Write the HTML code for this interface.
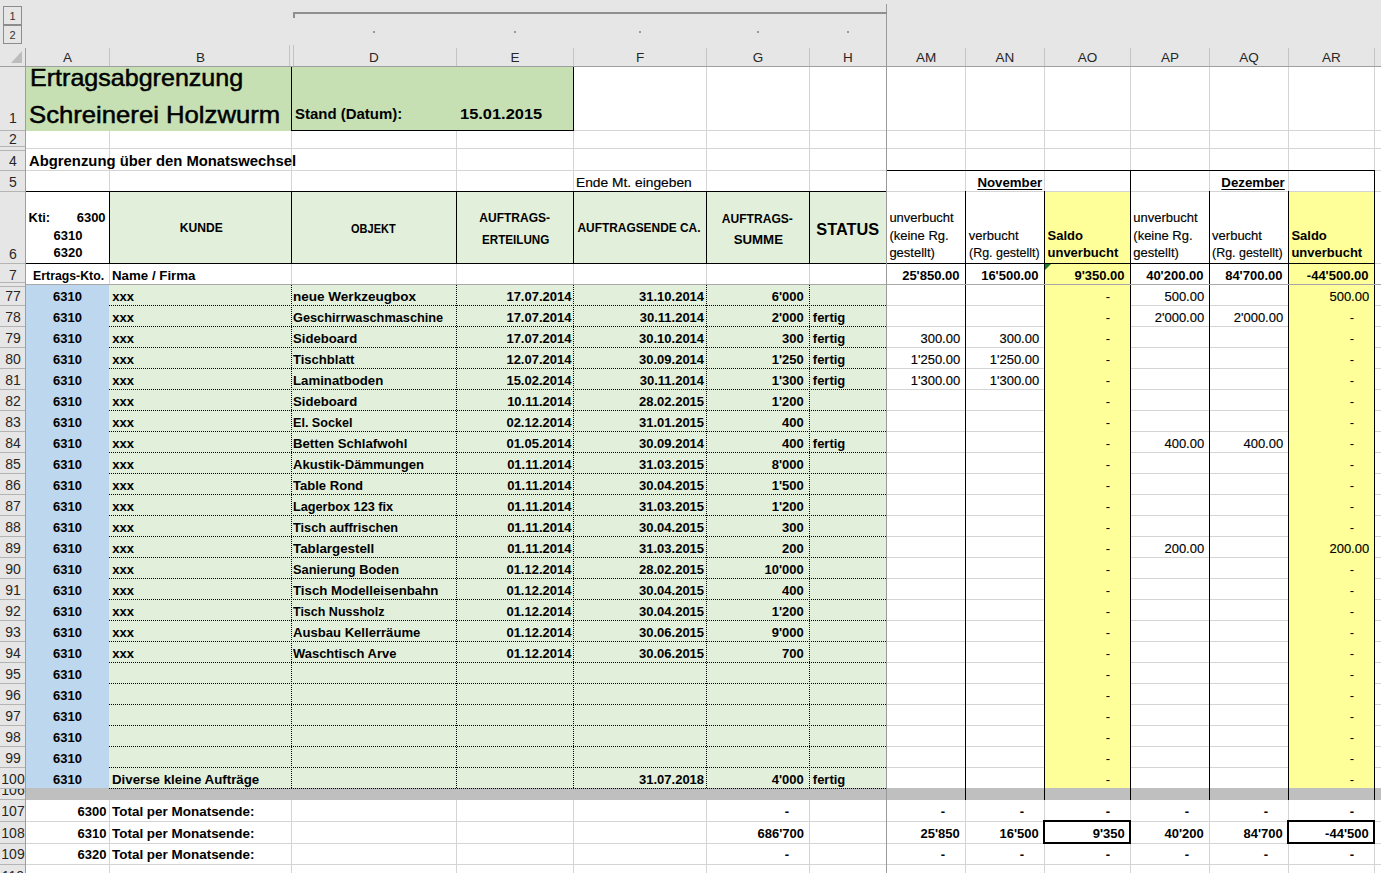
<!DOCTYPE html><html><head><meta charset="utf-8"><style>html,body{margin:0;padding:0;}body{width:1381px;height:873px;position:relative;overflow:hidden;background:#fff;font-family:"Liberation Sans",sans-serif;}#g div{position:absolute;}#h div{position:absolute;}.t{position:absolute;white-space:pre;line-height:1;}</style></head><body><div id="g">
<div style="left:109px;top:66px;width:1px;height:807px;background:#d4d4d4"></div>
<div style="left:291px;top:66px;width:1px;height:807px;background:#d4d4d4"></div>
<div style="left:456px;top:66px;width:1px;height:807px;background:#d4d4d4"></div>
<div style="left:573px;top:66px;width:1px;height:807px;background:#d4d4d4"></div>
<div style="left:706px;top:66px;width:1px;height:807px;background:#d4d4d4"></div>
<div style="left:809px;top:66px;width:1px;height:807px;background:#d4d4d4"></div>
<div style="left:886px;top:66px;width:1px;height:807px;background:#d4d4d4"></div>
<div style="left:965px;top:66px;width:1px;height:807px;background:#d4d4d4"></div>
<div style="left:1044px;top:66px;width:1px;height:807px;background:#d4d4d4"></div>
<div style="left:1130px;top:66px;width:1px;height:807px;background:#d4d4d4"></div>
<div style="left:1209px;top:66px;width:1px;height:807px;background:#d4d4d4"></div>
<div style="left:1288px;top:66px;width:1px;height:807px;background:#d4d4d4"></div>
<div style="left:1374px;top:66px;width:1px;height:807px;background:#d4d4d4"></div>
<div style="left:1453px;top:66px;width:1px;height:807px;background:#d4d4d4"></div>
<div style="left:25px;top:130px;width:1356px;height:1px;background:#d4d4d4"></div>
<div style="left:25px;top:148px;width:1356px;height:1px;background:#d4d4d4"></div>
<div style="left:25px;top:170px;width:1356px;height:1px;background:#d4d4d4"></div>
<div style="left:25px;top:191px;width:1356px;height:1px;background:#d4d4d4"></div>
<div style="left:25px;top:263px;width:1356px;height:1px;background:#d4d4d4"></div>
<div style="left:25px;top:284px;width:1356px;height:1px;background:#d4d4d4"></div>
<div style="left:25px;top:305px;width:1356px;height:1px;background:#d4d4d4"></div>
<div style="left:25px;top:326px;width:1356px;height:1px;background:#d4d4d4"></div>
<div style="left:25px;top:347px;width:1356px;height:1px;background:#d4d4d4"></div>
<div style="left:25px;top:368px;width:1356px;height:1px;background:#d4d4d4"></div>
<div style="left:25px;top:389px;width:1356px;height:1px;background:#d4d4d4"></div>
<div style="left:25px;top:410px;width:1356px;height:1px;background:#d4d4d4"></div>
<div style="left:25px;top:431px;width:1356px;height:1px;background:#d4d4d4"></div>
<div style="left:25px;top:452px;width:1356px;height:1px;background:#d4d4d4"></div>
<div style="left:25px;top:473px;width:1356px;height:1px;background:#d4d4d4"></div>
<div style="left:25px;top:494px;width:1356px;height:1px;background:#d4d4d4"></div>
<div style="left:25px;top:515px;width:1356px;height:1px;background:#d4d4d4"></div>
<div style="left:25px;top:536px;width:1356px;height:1px;background:#d4d4d4"></div>
<div style="left:25px;top:557px;width:1356px;height:1px;background:#d4d4d4"></div>
<div style="left:25px;top:578px;width:1356px;height:1px;background:#d4d4d4"></div>
<div style="left:25px;top:599px;width:1356px;height:1px;background:#d4d4d4"></div>
<div style="left:25px;top:620px;width:1356px;height:1px;background:#d4d4d4"></div>
<div style="left:25px;top:641px;width:1356px;height:1px;background:#d4d4d4"></div>
<div style="left:25px;top:662px;width:1356px;height:1px;background:#d4d4d4"></div>
<div style="left:25px;top:683px;width:1356px;height:1px;background:#d4d4d4"></div>
<div style="left:25px;top:704px;width:1356px;height:1px;background:#d4d4d4"></div>
<div style="left:25px;top:725px;width:1356px;height:1px;background:#d4d4d4"></div>
<div style="left:25px;top:746px;width:1356px;height:1px;background:#d4d4d4"></div>
<div style="left:25px;top:767px;width:1356px;height:1px;background:#d4d4d4"></div>
<div style="left:25px;top:788px;width:1356px;height:1px;background:#d4d4d4"></div>
<div style="left:25px;top:799px;width:1356px;height:1px;background:#d4d4d4"></div>
<div style="left:25px;top:821px;width:1356px;height:1px;background:#d4d4d4"></div>
<div style="left:25px;top:843px;width:1356px;height:1px;background:#d4d4d4"></div>
<div style="left:25px;top:864px;width:1356px;height:1px;background:#d4d4d4"></div>
<div style="left:25px;top:886px;width:1356px;height:1px;background:#d4d4d4"></div>
<div style="left:26px;top:67px;width:265px;height:64px;background:#c6e0b4"></div>
<div style="left:292px;top:67px;width:281px;height:63px;background:#c6e0b4"></div>
<div style="left:110px;top:192px;width:776px;height:71px;background:#e2efda"></div>
<div style="left:26px;top:285px;width:83px;height:503px;background:#bdd7ee"></div>
<div style="left:109px;top:285px;width:777px;height:503px;background:#e2efda"></div>
<div style="left:1045px;top:192px;width:85px;height:607px;background:#ffff99"></div>
<div style="left:1289px;top:192px;width:85px;height:607px;background:#ffff99"></div>
<div style="left:26px;top:788px;width:1355px;height:12px;background:#bfbfbf"></div>
<div style="left:291px;top:66px;width:1px;height:65px;background:#000"></div>
<div style="left:573px;top:66px;width:1px;height:65px;background:#000"></div>
<div style="left:291px;top:130px;width:283px;height:1px;background:#000"></div>
<div style="left:25px;top:191px;width:861px;height:1px;background:#000"></div>
<div style="left:25px;top:263px;width:1350px;height:1px;background:#000"></div>
<div style="left:109px;top:191px;width:1px;height:73px;background:#000"></div>
<div style="left:291px;top:191px;width:1px;height:73px;background:#000"></div>
<div style="left:456px;top:191px;width:1px;height:73px;background:#000"></div>
<div style="left:573px;top:191px;width:1px;height:73px;background:#000"></div>
<div style="left:706px;top:191px;width:1px;height:73px;background:#000"></div>
<div style="left:809px;top:191px;width:1px;height:73px;background:#000"></div>
<div style="left:886px;top:170px;width:489px;height:1px;background:#000"></div>
<div style="left:1130px;top:170px;width:1px;height:630px;background:#000"></div>
<div style="left:1374px;top:170px;width:1px;height:630px;background:#000"></div>
<div style="left:965px;top:191px;width:1px;height:609px;background:#000"></div>
<div style="left:1044px;top:191px;width:1px;height:609px;background:#000"></div>
<div style="left:1209px;top:191px;width:1px;height:609px;background:#000"></div>
<div style="left:1288px;top:191px;width:1px;height:609px;background:#000"></div>
<div style="left:25px;top:284px;width:1356px;height:1px;background:#a8a8a8"></div>
<div style="left:109px;top:305px;width:777px;height:1px;background:repeating-linear-gradient(90deg,#000 0 1px,transparent 1px 2px)"></div>
<div style="left:109px;top:326px;width:777px;height:1px;background:repeating-linear-gradient(90deg,#000 0 1px,transparent 1px 2px)"></div>
<div style="left:109px;top:347px;width:777px;height:1px;background:repeating-linear-gradient(90deg,#000 0 1px,transparent 1px 2px)"></div>
<div style="left:109px;top:368px;width:777px;height:1px;background:repeating-linear-gradient(90deg,#000 0 1px,transparent 1px 2px)"></div>
<div style="left:109px;top:389px;width:777px;height:1px;background:repeating-linear-gradient(90deg,#000 0 1px,transparent 1px 2px)"></div>
<div style="left:109px;top:410px;width:777px;height:1px;background:repeating-linear-gradient(90deg,#000 0 1px,transparent 1px 2px)"></div>
<div style="left:109px;top:431px;width:777px;height:1px;background:repeating-linear-gradient(90deg,#000 0 1px,transparent 1px 2px)"></div>
<div style="left:109px;top:452px;width:777px;height:1px;background:repeating-linear-gradient(90deg,#000 0 1px,transparent 1px 2px)"></div>
<div style="left:109px;top:473px;width:777px;height:1px;background:repeating-linear-gradient(90deg,#000 0 1px,transparent 1px 2px)"></div>
<div style="left:109px;top:494px;width:777px;height:1px;background:repeating-linear-gradient(90deg,#000 0 1px,transparent 1px 2px)"></div>
<div style="left:109px;top:515px;width:777px;height:1px;background:repeating-linear-gradient(90deg,#000 0 1px,transparent 1px 2px)"></div>
<div style="left:109px;top:536px;width:777px;height:1px;background:repeating-linear-gradient(90deg,#000 0 1px,transparent 1px 2px)"></div>
<div style="left:109px;top:557px;width:777px;height:1px;background:repeating-linear-gradient(90deg,#000 0 1px,transparent 1px 2px)"></div>
<div style="left:109px;top:578px;width:777px;height:1px;background:repeating-linear-gradient(90deg,#000 0 1px,transparent 1px 2px)"></div>
<div style="left:109px;top:599px;width:777px;height:1px;background:repeating-linear-gradient(90deg,#000 0 1px,transparent 1px 2px)"></div>
<div style="left:109px;top:620px;width:777px;height:1px;background:repeating-linear-gradient(90deg,#000 0 1px,transparent 1px 2px)"></div>
<div style="left:109px;top:641px;width:777px;height:1px;background:repeating-linear-gradient(90deg,#000 0 1px,transparent 1px 2px)"></div>
<div style="left:109px;top:662px;width:777px;height:1px;background:repeating-linear-gradient(90deg,#000 0 1px,transparent 1px 2px)"></div>
<div style="left:109px;top:683px;width:777px;height:1px;background:repeating-linear-gradient(90deg,#000 0 1px,transparent 1px 2px)"></div>
<div style="left:109px;top:704px;width:777px;height:1px;background:repeating-linear-gradient(90deg,#000 0 1px,transparent 1px 2px)"></div>
<div style="left:109px;top:725px;width:777px;height:1px;background:repeating-linear-gradient(90deg,#000 0 1px,transparent 1px 2px)"></div>
<div style="left:109px;top:746px;width:777px;height:1px;background:repeating-linear-gradient(90deg,#000 0 1px,transparent 1px 2px)"></div>
<div style="left:109px;top:767px;width:777px;height:1px;background:repeating-linear-gradient(90deg,#000 0 1px,transparent 1px 2px)"></div>
<div style="left:109px;top:788px;width:777px;height:1px;background:repeating-linear-gradient(90deg,#000 0 1px,transparent 1px 2px)"></div>
<div style="left:291px;top:285px;width:1px;height:503px;background:repeating-linear-gradient(180deg,#000 0 1px,transparent 1px 2px)"></div>
<div style="left:456px;top:285px;width:1px;height:503px;background:repeating-linear-gradient(180deg,#000 0 1px,transparent 1px 2px)"></div>
<div style="left:573px;top:285px;width:1px;height:503px;background:repeating-linear-gradient(180deg,#000 0 1px,transparent 1px 2px)"></div>
<div style="left:706px;top:285px;width:1px;height:503px;background:repeating-linear-gradient(180deg,#000 0 1px,transparent 1px 2px)"></div>
<div style="left:809px;top:285px;width:1px;height:503px;background:repeating-linear-gradient(180deg,#000 0 1px,transparent 1px 2px)"></div>
<div style="left:1043px;top:820px;width:88px;height:2px;background:#000"></div>
<div style="left:1043px;top:842px;width:88px;height:2px;background:#000"></div>
<div style="left:1043px;top:820px;width:2px;height:24px;background:#000"></div>
<div style="left:1129px;top:820px;width:2px;height:24px;background:#000"></div>
<div style="left:1287px;top:820px;width:88px;height:2px;background:#000"></div>
<div style="left:1287px;top:842px;width:88px;height:2px;background:#000"></div>
<div style="left:1287px;top:820px;width:2px;height:24px;background:#000"></div>
<div style="left:1373px;top:820px;width:2px;height:24px;background:#000"></div>
<div style="left:886px;top:4px;width:1px;height:869px;background:#9a9a9a"></div>
<div style="left:1045px;top:264px;width:0;height:0;border-top:6px solid #1d7a2c;border-right:6px solid transparent"></div>
<span class="t" id="t0" style="left:29.80px;top:65.68px;font-size:24px;font-weight:normal;color:#000;transform:scaleX(1.0444);transform-origin:left;-webkit-text-stroke:0.5px #000">Ertragsabgrenzung</span>
<span class="t" id="t1" style="left:28.80px;top:102.68px;font-size:24px;font-weight:normal;color:#000;transform:scaleX(1.0701);transform-origin:left;-webkit-text-stroke:0.5px #000">Schreinerei Holzwurm</span>
<span class="t" id="t2" style="left:294.60px;top:107.14px;font-size:14.6px;font-weight:bold;color:#000;transform:scaleX(1.0259);transform-origin:left">Stand (Datum):</span>
<span class="t" id="t3" style="left:459.60px;top:107.14px;font-size:14.6px;font-weight:bold;color:#000;transform:scaleX(1.1253);transform-origin:left">15.01.2015</span>
<span class="t" id="t4" style="left:29.10px;top:153.30px;font-size:15px;font-weight:bold;color:#000;transform:scaleX(0.9888);transform-origin:left">Abgrenzung über den Monatswechsel</span>
<span class="t" id="t5" style="left:576.40px;top:175.80px;font-size:13px;font-weight:normal;color:#000;transform:scaleX(1.0610);transform-origin:left;-webkit-text-stroke:0.15px #000">Ende Mt. eingeben</span>
<span class="t" id="t6" style="left:977.51px;top:175.70px;font-size:13px;font-weight:bold;color:#000;transform:scaleX(1.0192);transform-origin:center"><u style="text-decoration-thickness:1px;text-underline-offset:2px">November</u></span>
<span class="t" id="t7" style="left:1221.93px;top:175.70px;font-size:13px;font-weight:bold;color:#000;transform:scaleX(1.0203);transform-origin:center"><u style="text-decoration-thickness:1px;text-underline-offset:2px">Dezember</u></span>
<span class="t" id="t8" style="left:28.50px;top:211.00px;font-size:13px;font-weight:bold;color:#000">Kti:</span>
<span class="t" id="t9" style="left:76.68px;top:211.00px;font-size:13px;font-weight:bold;color:#000">6300</span>
<span class="t" id="t10" style="left:53.50px;top:228.70px;font-size:13px;font-weight:bold;color:#000">6310</span>
<span class="t" id="t11" style="left:53.50px;top:246.40px;font-size:13px;font-weight:bold;color:#000">6320</span>
<span class="t" id="t12" style="left:179.96px;top:222.04px;font-size:12px;font-weight:bold;color:#000;transform:scaleX(1.0077);transform-origin:center">KUNDE</span>
<span class="t" id="t13" style="left:349.41px;top:222.54px;font-size:12px;font-weight:bold;color:#000;transform:scaleX(0.9140);transform-origin:center">OBJEKT</span>
<span class="t" id="t14" style="left:479.36px;top:212.34px;font-size:12px;font-weight:bold;color:#000">AUFTRAGS-</span>
<span class="t" id="t15" style="left:480.63px;top:234.04px;font-size:12px;font-weight:bold;color:#000;transform:scaleX(0.9720);transform-origin:center">ERTEILUNG</span>
<span class="t" id="t16" style="left:577.49px;top:222.14px;font-size:12px;font-weight:bold;color:#000;transform:scaleX(0.9918);transform-origin:center">AUFTRAGSENDE CA.</span>
<span class="t" id="t17" style="left:722.16px;top:212.84px;font-size:12px;font-weight:bold;color:#000;transform:scaleX(1.0046);transform-origin:center">AUFTRAGS-</span>
<span class="t" id="t18" style="left:735.66px;top:234.04px;font-size:12px;font-weight:bold;color:#000;transform:scaleX(1.1058);transform-origin:center">SUMME</span>
<span class="t" id="t19" style="left:814.66px;top:221.31px;font-size:17px;font-weight:bold;color:#000;transform:scaleX(0.9590);transform-origin:center">STATUS</span>
<span class="t" id="t20" style="left:889.40px;top:211.00px;font-size:13px;font-weight:normal;color:#000;-webkit-text-stroke:0.15px #000">unverbucht</span>
<span class="t" id="t21" style="left:889.40px;top:229.20px;font-size:13px;font-weight:normal;color:#000;-webkit-text-stroke:0.15px #000">(keine Rg.</span>
<span class="t" id="t22" style="left:889.40px;top:246.40px;font-size:13px;font-weight:normal;color:#000;-webkit-text-stroke:0.15px #000">gestellt)</span>
<span class="t" id="t23" style="left:1133.30px;top:211.00px;font-size:13px;font-weight:normal;color:#000;-webkit-text-stroke:0.15px #000">unverbucht</span>
<span class="t" id="t24" style="left:1133.30px;top:229.20px;font-size:13px;font-weight:normal;color:#000;-webkit-text-stroke:0.15px #000">(keine Rg.</span>
<span class="t" id="t25" style="left:1133.30px;top:246.40px;font-size:13px;font-weight:normal;color:#000;-webkit-text-stroke:0.15px #000">gestellt)</span>
<span class="t" id="t26" style="left:968.70px;top:229.20px;font-size:13px;font-weight:normal;color:#000;-webkit-text-stroke:0.15px #000">verbucht</span>
<span class="t" id="t27" style="left:968.70px;top:246.40px;font-size:13px;font-weight:normal;color:#000;transform:scaleX(0.9579);transform-origin:left;-webkit-text-stroke:0.15px #000">(Rg. gestellt)</span>
<span class="t" id="t28" style="left:1212.10px;top:229.20px;font-size:13px;font-weight:normal;color:#000;-webkit-text-stroke:0.15px #000">verbucht</span>
<span class="t" id="t29" style="left:1212.10px;top:246.40px;font-size:13px;font-weight:normal;color:#000;transform:scaleX(0.9579);transform-origin:left;-webkit-text-stroke:0.15px #000">(Rg. gestellt)</span>
<span class="t" id="t30" style="left:1047.50px;top:229.20px;font-size:13px;font-weight:bold;color:#000">Saldo</span>
<span class="t" id="t31" style="left:1047.50px;top:246.40px;font-size:13px;font-weight:bold;color:#000">unverbucht</span>
<span class="t" id="t32" style="left:1291.40px;top:229.20px;font-size:13px;font-weight:bold;color:#000">Saldo</span>
<span class="t" id="t33" style="left:1291.40px;top:246.40px;font-size:13px;font-weight:bold;color:#000">unverbucht</span>
<span class="t" id="t34" style="left:30.54px;top:268.60px;font-size:13px;font-weight:bold;color:#000;transform:scaleX(0.9451);transform-origin:center">Ertrags-Kto.</span>
<span class="t" id="t35" style="left:112.00px;top:268.60px;font-size:13px;font-weight:bold;color:#000;transform:scaleX(1.0226);transform-origin:left">Name / Firma</span>
<span class="t" id="t36" style="left:902.17px;top:268.60px;font-size:13px;font-weight:bold;color:#000">25'850.00</span>
<span class="t" id="t37" style="left:981.17px;top:268.60px;font-size:13px;font-weight:bold;color:#000">16'500.00</span>
<span class="t" id="t38" style="left:1074.41px;top:268.60px;font-size:13px;font-weight:bold;color:#000">9'350.00</span>
<span class="t" id="t39" style="left:1146.17px;top:268.60px;font-size:13px;font-weight:bold;color:#000">40'200.00</span>
<span class="t" id="t40" style="left:1225.17px;top:268.60px;font-size:13px;font-weight:bold;color:#000">84'700.00</span>
<span class="t" id="t41" style="left:1306.84px;top:268.60px;font-size:13px;font-weight:bold;color:#000">-44'500.00</span>
<span class="t" id="t42" style="left:53.04px;top:290.00px;font-size:13px;font-weight:bold;color:#000">6310</span>
<span class="t" id="t43" style="left:112.20px;top:290.00px;font-size:13px;font-weight:bold;color:#000">xxx</span>
<span class="t" id="t44" style="left:293.30px;top:290.00px;font-size:13px;font-weight:bold;color:#000;transform:scaleX(1.0403);transform-origin:left">neue Werkzeugbox</span>
<span class="t" id="t45" style="left:506.42px;top:290.00px;font-size:13px;font-weight:bold;color:#000">17.07.2014</span>
<span class="t" id="t46" style="left:639.02px;top:290.00px;font-size:13px;font-weight:bold;color:#000">31.10.2014</span>
<span class="t" id="t47" style="left:771.68px;top:290.00px;font-size:13px;font-weight:bold;color:#000">6'000</span>
<span class="t" id="t48" style="left:1164.43px;top:290.00px;font-size:13px;font-weight:normal;color:#000;-webkit-text-stroke:0.15px #000">500.00</span>
<span class="t" id="t49" style="left:1105.66px;top:290.00px;font-size:13px;font-weight:normal;color:#000">-</span>
<span class="t" id="t50" style="left:1329.43px;top:290.00px;font-size:13px;font-weight:normal;color:#000;-webkit-text-stroke:0.15px #000">500.00</span>
<span class="t" id="t51" style="left:53.04px;top:311.00px;font-size:13px;font-weight:bold;color:#000">6310</span>
<span class="t" id="t52" style="left:112.20px;top:311.00px;font-size:13px;font-weight:bold;color:#000">xxx</span>
<span class="t" id="t53" style="left:293.30px;top:311.00px;font-size:13px;font-weight:bold;color:#000;transform:scaleX(0.9804);transform-origin:left">Geschirrwaschmaschine</span>
<span class="t" id="t54" style="left:506.42px;top:311.00px;font-size:13px;font-weight:bold;color:#000">17.07.2014</span>
<span class="t" id="t55" style="left:639.74px;top:311.00px;font-size:13px;font-weight:bold;color:#000">30.11.2014</span>
<span class="t" id="t56" style="left:771.68px;top:311.00px;font-size:13px;font-weight:bold;color:#000">2'000</span>
<span class="t" id="t57" style="left:812.80px;top:311.00px;font-size:13px;font-weight:bold;color:#000">fertig</span>
<span class="t" id="t58" style="left:1154.72px;top:311.00px;font-size:13px;font-weight:normal;color:#000;-webkit-text-stroke:0.15px #000">2'000.00</span>
<span class="t" id="t59" style="left:1233.72px;top:311.00px;font-size:13px;font-weight:normal;color:#000;-webkit-text-stroke:0.15px #000">2'000.00</span>
<span class="t" id="t60" style="left:1105.66px;top:311.00px;font-size:13px;font-weight:normal;color:#000">-</span>
<span class="t" id="t61" style="left:1349.66px;top:311.00px;font-size:13px;font-weight:normal;color:#000">-</span>
<span class="t" id="t62" style="left:53.04px;top:332.00px;font-size:13px;font-weight:bold;color:#000">6310</span>
<span class="t" id="t63" style="left:112.20px;top:332.00px;font-size:13px;font-weight:bold;color:#000">xxx</span>
<span class="t" id="t64" style="left:293.30px;top:332.00px;font-size:13px;font-weight:bold;color:#000;transform:scaleX(1.0098);transform-origin:left">Sideboard</span>
<span class="t" id="t65" style="left:506.42px;top:332.00px;font-size:13px;font-weight:bold;color:#000">17.07.2014</span>
<span class="t" id="t66" style="left:639.02px;top:332.00px;font-size:13px;font-weight:bold;color:#000">30.10.2014</span>
<span class="t" id="t67" style="left:782.00px;top:332.00px;font-size:13px;font-weight:bold;color:#000">300</span>
<span class="t" id="t68" style="left:812.80px;top:332.00px;font-size:13px;font-weight:bold;color:#000">fertig</span>
<span class="t" id="t69" style="left:920.43px;top:332.00px;font-size:13px;font-weight:normal;color:#000;-webkit-text-stroke:0.15px #000">300.00</span>
<span class="t" id="t70" style="left:999.43px;top:332.00px;font-size:13px;font-weight:normal;color:#000;-webkit-text-stroke:0.15px #000">300.00</span>
<span class="t" id="t71" style="left:1105.66px;top:332.00px;font-size:13px;font-weight:normal;color:#000">-</span>
<span class="t" id="t72" style="left:1349.66px;top:332.00px;font-size:13px;font-weight:normal;color:#000">-</span>
<span class="t" id="t73" style="left:53.04px;top:353.00px;font-size:13px;font-weight:bold;color:#000">6310</span>
<span class="t" id="t74" style="left:112.20px;top:353.00px;font-size:13px;font-weight:bold;color:#000">xxx</span>
<span class="t" id="t75" style="left:293.30px;top:353.00px;font-size:13px;font-weight:bold;color:#000;transform:scaleX(1.0037);transform-origin:left">Tischblatt</span>
<span class="t" id="t76" style="left:506.42px;top:353.00px;font-size:13px;font-weight:bold;color:#000">12.07.2014</span>
<span class="t" id="t77" style="left:639.02px;top:353.00px;font-size:13px;font-weight:bold;color:#000">30.09.2014</span>
<span class="t" id="t78" style="left:771.68px;top:353.00px;font-size:13px;font-weight:bold;color:#000">1'250</span>
<span class="t" id="t79" style="left:812.80px;top:353.00px;font-size:13px;font-weight:bold;color:#000">fertig</span>
<span class="t" id="t80" style="left:910.72px;top:353.00px;font-size:13px;font-weight:normal;color:#000;-webkit-text-stroke:0.15px #000">1'250.00</span>
<span class="t" id="t81" style="left:989.72px;top:353.00px;font-size:13px;font-weight:normal;color:#000;-webkit-text-stroke:0.15px #000">1'250.00</span>
<span class="t" id="t82" style="left:1105.66px;top:353.00px;font-size:13px;font-weight:normal;color:#000">-</span>
<span class="t" id="t83" style="left:1349.66px;top:353.00px;font-size:13px;font-weight:normal;color:#000">-</span>
<span class="t" id="t84" style="left:53.04px;top:374.00px;font-size:13px;font-weight:bold;color:#000">6310</span>
<span class="t" id="t85" style="left:112.20px;top:374.00px;font-size:13px;font-weight:bold;color:#000">xxx</span>
<span class="t" id="t86" style="left:293.30px;top:374.00px;font-size:13px;font-weight:bold;color:#000;transform:scaleX(1.0164);transform-origin:left">Laminatboden</span>
<span class="t" id="t87" style="left:506.42px;top:374.00px;font-size:13px;font-weight:bold;color:#000">15.02.2014</span>
<span class="t" id="t88" style="left:639.74px;top:374.00px;font-size:13px;font-weight:bold;color:#000">30.11.2014</span>
<span class="t" id="t89" style="left:771.68px;top:374.00px;font-size:13px;font-weight:bold;color:#000">1'300</span>
<span class="t" id="t90" style="left:812.80px;top:374.00px;font-size:13px;font-weight:bold;color:#000">fertig</span>
<span class="t" id="t91" style="left:910.72px;top:374.00px;font-size:13px;font-weight:normal;color:#000;-webkit-text-stroke:0.15px #000">1'300.00</span>
<span class="t" id="t92" style="left:989.72px;top:374.00px;font-size:13px;font-weight:normal;color:#000;-webkit-text-stroke:0.15px #000">1'300.00</span>
<span class="t" id="t93" style="left:1105.66px;top:374.00px;font-size:13px;font-weight:normal;color:#000">-</span>
<span class="t" id="t94" style="left:1349.66px;top:374.00px;font-size:13px;font-weight:normal;color:#000">-</span>
<span class="t" id="t95" style="left:53.04px;top:395.00px;font-size:13px;font-weight:bold;color:#000">6310</span>
<span class="t" id="t96" style="left:112.20px;top:395.00px;font-size:13px;font-weight:bold;color:#000">xxx</span>
<span class="t" id="t97" style="left:293.30px;top:395.00px;font-size:13px;font-weight:bold;color:#000;transform:scaleX(1.0098);transform-origin:left">Sideboard</span>
<span class="t" id="t98" style="left:507.14px;top:395.00px;font-size:13px;font-weight:bold;color:#000">10.11.2014</span>
<span class="t" id="t99" style="left:639.02px;top:395.00px;font-size:13px;font-weight:bold;color:#000">28.02.2015</span>
<span class="t" id="t100" style="left:771.68px;top:395.00px;font-size:13px;font-weight:bold;color:#000">1'200</span>
<span class="t" id="t101" style="left:1105.66px;top:395.00px;font-size:13px;font-weight:normal;color:#000">-</span>
<span class="t" id="t102" style="left:1349.66px;top:395.00px;font-size:13px;font-weight:normal;color:#000">-</span>
<span class="t" id="t103" style="left:53.04px;top:416.00px;font-size:13px;font-weight:bold;color:#000">6310</span>
<span class="t" id="t104" style="left:112.20px;top:416.00px;font-size:13px;font-weight:bold;color:#000">xxx</span>
<span class="t" id="t105" style="left:293.30px;top:416.00px;font-size:13px;font-weight:bold;color:#000;transform:scaleX(0.9671);transform-origin:left">El. Sockel</span>
<span class="t" id="t106" style="left:506.42px;top:416.00px;font-size:13px;font-weight:bold;color:#000">02.12.2014</span>
<span class="t" id="t107" style="left:639.02px;top:416.00px;font-size:13px;font-weight:bold;color:#000">31.01.2015</span>
<span class="t" id="t108" style="left:782.00px;top:416.00px;font-size:13px;font-weight:bold;color:#000">400</span>
<span class="t" id="t109" style="left:1105.66px;top:416.00px;font-size:13px;font-weight:normal;color:#000">-</span>
<span class="t" id="t110" style="left:1349.66px;top:416.00px;font-size:13px;font-weight:normal;color:#000">-</span>
<span class="t" id="t111" style="left:53.04px;top:437.00px;font-size:13px;font-weight:bold;color:#000">6310</span>
<span class="t" id="t112" style="left:112.20px;top:437.00px;font-size:13px;font-weight:bold;color:#000">xxx</span>
<span class="t" id="t113" style="left:293.30px;top:437.00px;font-size:13px;font-weight:bold;color:#000;transform:scaleX(1.0143);transform-origin:left">Betten Schlafwohl</span>
<span class="t" id="t114" style="left:506.42px;top:437.00px;font-size:13px;font-weight:bold;color:#000">01.05.2014</span>
<span class="t" id="t115" style="left:639.02px;top:437.00px;font-size:13px;font-weight:bold;color:#000">30.09.2014</span>
<span class="t" id="t116" style="left:782.00px;top:437.00px;font-size:13px;font-weight:bold;color:#000">400</span>
<span class="t" id="t117" style="left:812.80px;top:437.00px;font-size:13px;font-weight:bold;color:#000">fertig</span>
<span class="t" id="t118" style="left:1164.43px;top:437.00px;font-size:13px;font-weight:normal;color:#000;-webkit-text-stroke:0.15px #000">400.00</span>
<span class="t" id="t119" style="left:1243.43px;top:437.00px;font-size:13px;font-weight:normal;color:#000;-webkit-text-stroke:0.15px #000">400.00</span>
<span class="t" id="t120" style="left:1105.66px;top:437.00px;font-size:13px;font-weight:normal;color:#000">-</span>
<span class="t" id="t121" style="left:1349.66px;top:437.00px;font-size:13px;font-weight:normal;color:#000">-</span>
<span class="t" id="t122" style="left:53.04px;top:458.00px;font-size:13px;font-weight:bold;color:#000">6310</span>
<span class="t" id="t123" style="left:112.20px;top:458.00px;font-size:13px;font-weight:bold;color:#000">xxx</span>
<span class="t" id="t124" style="left:293.30px;top:458.00px;font-size:13px;font-weight:bold;color:#000;transform:scaleX(1.0075);transform-origin:left">Akustik-Dämmungen</span>
<span class="t" id="t125" style="left:507.14px;top:458.00px;font-size:13px;font-weight:bold;color:#000">01.11.2014</span>
<span class="t" id="t126" style="left:639.02px;top:458.00px;font-size:13px;font-weight:bold;color:#000">31.03.2015</span>
<span class="t" id="t127" style="left:771.68px;top:458.00px;font-size:13px;font-weight:bold;color:#000">8'000</span>
<span class="t" id="t128" style="left:1105.66px;top:458.00px;font-size:13px;font-weight:normal;color:#000">-</span>
<span class="t" id="t129" style="left:1349.66px;top:458.00px;font-size:13px;font-weight:normal;color:#000">-</span>
<span class="t" id="t130" style="left:53.04px;top:479.00px;font-size:13px;font-weight:bold;color:#000">6310</span>
<span class="t" id="t131" style="left:112.20px;top:479.00px;font-size:13px;font-weight:bold;color:#000">xxx</span>
<span class="t" id="t132" style="left:293.30px;top:479.00px;font-size:13px;font-weight:bold;color:#000;transform:scaleX(1.0041);transform-origin:left">Table Rond</span>
<span class="t" id="t133" style="left:507.14px;top:479.00px;font-size:13px;font-weight:bold;color:#000">01.11.2014</span>
<span class="t" id="t134" style="left:639.02px;top:479.00px;font-size:13px;font-weight:bold;color:#000">30.04.2015</span>
<span class="t" id="t135" style="left:771.68px;top:479.00px;font-size:13px;font-weight:bold;color:#000">1'500</span>
<span class="t" id="t136" style="left:1105.66px;top:479.00px;font-size:13px;font-weight:normal;color:#000">-</span>
<span class="t" id="t137" style="left:1349.66px;top:479.00px;font-size:13px;font-weight:normal;color:#000">-</span>
<span class="t" id="t138" style="left:53.04px;top:500.00px;font-size:13px;font-weight:bold;color:#000">6310</span>
<span class="t" id="t139" style="left:112.20px;top:500.00px;font-size:13px;font-weight:bold;color:#000">xxx</span>
<span class="t" id="t140" style="left:293.30px;top:500.00px;font-size:13px;font-weight:bold;color:#000;transform:scaleX(0.9755);transform-origin:left">Lagerbox 123 fix</span>
<span class="t" id="t141" style="left:507.14px;top:500.00px;font-size:13px;font-weight:bold;color:#000">01.11.2014</span>
<span class="t" id="t142" style="left:639.02px;top:500.00px;font-size:13px;font-weight:bold;color:#000">31.03.2015</span>
<span class="t" id="t143" style="left:771.68px;top:500.00px;font-size:13px;font-weight:bold;color:#000">1'200</span>
<span class="t" id="t144" style="left:1105.66px;top:500.00px;font-size:13px;font-weight:normal;color:#000">-</span>
<span class="t" id="t145" style="left:1349.66px;top:500.00px;font-size:13px;font-weight:normal;color:#000">-</span>
<span class="t" id="t146" style="left:53.04px;top:521.00px;font-size:13px;font-weight:bold;color:#000">6310</span>
<span class="t" id="t147" style="left:112.20px;top:521.00px;font-size:13px;font-weight:bold;color:#000">xxx</span>
<span class="t" id="t148" style="left:293.30px;top:521.00px;font-size:13px;font-weight:bold;color:#000;transform:scaleX(0.9785);transform-origin:left">Tisch auffrischen</span>
<span class="t" id="t149" style="left:507.14px;top:521.00px;font-size:13px;font-weight:bold;color:#000">01.11.2014</span>
<span class="t" id="t150" style="left:639.02px;top:521.00px;font-size:13px;font-weight:bold;color:#000">30.04.2015</span>
<span class="t" id="t151" style="left:782.00px;top:521.00px;font-size:13px;font-weight:bold;color:#000">300</span>
<span class="t" id="t152" style="left:1105.66px;top:521.00px;font-size:13px;font-weight:normal;color:#000">-</span>
<span class="t" id="t153" style="left:1349.66px;top:521.00px;font-size:13px;font-weight:normal;color:#000">-</span>
<span class="t" id="t154" style="left:53.04px;top:542.00px;font-size:13px;font-weight:bold;color:#000">6310</span>
<span class="t" id="t155" style="left:112.20px;top:542.00px;font-size:13px;font-weight:bold;color:#000">xxx</span>
<span class="t" id="t156" style="left:293.30px;top:542.00px;font-size:13px;font-weight:bold;color:#000;transform:scaleX(1.0248);transform-origin:left">Tablargestell</span>
<span class="t" id="t157" style="left:507.14px;top:542.00px;font-size:13px;font-weight:bold;color:#000">01.11.2014</span>
<span class="t" id="t158" style="left:639.02px;top:542.00px;font-size:13px;font-weight:bold;color:#000">31.03.2015</span>
<span class="t" id="t159" style="left:782.00px;top:542.00px;font-size:13px;font-weight:bold;color:#000">200</span>
<span class="t" id="t160" style="left:1164.43px;top:542.00px;font-size:13px;font-weight:normal;color:#000;-webkit-text-stroke:0.15px #000">200.00</span>
<span class="t" id="t161" style="left:1105.66px;top:542.00px;font-size:13px;font-weight:normal;color:#000">-</span>
<span class="t" id="t162" style="left:1329.43px;top:542.00px;font-size:13px;font-weight:normal;color:#000;-webkit-text-stroke:0.15px #000">200.00</span>
<span class="t" id="t163" style="left:53.04px;top:563.00px;font-size:13px;font-weight:bold;color:#000">6310</span>
<span class="t" id="t164" style="left:112.20px;top:563.00px;font-size:13px;font-weight:bold;color:#000">xxx</span>
<span class="t" id="t165" style="left:293.30px;top:563.00px;font-size:13px;font-weight:bold;color:#000;transform:scaleX(0.9849);transform-origin:left">Sanierung Boden</span>
<span class="t" id="t166" style="left:506.42px;top:563.00px;font-size:13px;font-weight:bold;color:#000">01.12.2014</span>
<span class="t" id="t167" style="left:639.02px;top:563.00px;font-size:13px;font-weight:bold;color:#000">28.02.2015</span>
<span class="t" id="t168" style="left:764.45px;top:563.00px;font-size:13px;font-weight:bold;color:#000">10'000</span>
<span class="t" id="t169" style="left:1105.66px;top:563.00px;font-size:13px;font-weight:normal;color:#000">-</span>
<span class="t" id="t170" style="left:1349.66px;top:563.00px;font-size:13px;font-weight:normal;color:#000">-</span>
<span class="t" id="t171" style="left:53.04px;top:584.00px;font-size:13px;font-weight:bold;color:#000">6310</span>
<span class="t" id="t172" style="left:112.20px;top:584.00px;font-size:13px;font-weight:bold;color:#000">xxx</span>
<span class="t" id="t173" style="left:293.30px;top:584.00px;font-size:13px;font-weight:bold;color:#000;transform:scaleX(1.0182);transform-origin:left">Tisch Modelleisenbahn</span>
<span class="t" id="t174" style="left:506.42px;top:584.00px;font-size:13px;font-weight:bold;color:#000">01.12.2014</span>
<span class="t" id="t175" style="left:639.02px;top:584.00px;font-size:13px;font-weight:bold;color:#000">30.04.2015</span>
<span class="t" id="t176" style="left:782.00px;top:584.00px;font-size:13px;font-weight:bold;color:#000">400</span>
<span class="t" id="t177" style="left:1105.66px;top:584.00px;font-size:13px;font-weight:normal;color:#000">-</span>
<span class="t" id="t178" style="left:1349.66px;top:584.00px;font-size:13px;font-weight:normal;color:#000">-</span>
<span class="t" id="t179" style="left:53.04px;top:605.00px;font-size:13px;font-weight:bold;color:#000">6310</span>
<span class="t" id="t180" style="left:112.20px;top:605.00px;font-size:13px;font-weight:bold;color:#000">xxx</span>
<span class="t" id="t181" style="left:293.30px;top:605.00px;font-size:13px;font-weight:bold;color:#000;transform:scaleX(0.9608);transform-origin:left">Tisch Nussholz</span>
<span class="t" id="t182" style="left:506.42px;top:605.00px;font-size:13px;font-weight:bold;color:#000">01.12.2014</span>
<span class="t" id="t183" style="left:639.02px;top:605.00px;font-size:13px;font-weight:bold;color:#000">30.04.2015</span>
<span class="t" id="t184" style="left:771.68px;top:605.00px;font-size:13px;font-weight:bold;color:#000">1'200</span>
<span class="t" id="t185" style="left:1105.66px;top:605.00px;font-size:13px;font-weight:normal;color:#000">-</span>
<span class="t" id="t186" style="left:1349.66px;top:605.00px;font-size:13px;font-weight:normal;color:#000">-</span>
<span class="t" id="t187" style="left:53.04px;top:626.00px;font-size:13px;font-weight:bold;color:#000">6310</span>
<span class="t" id="t188" style="left:112.20px;top:626.00px;font-size:13px;font-weight:bold;color:#000">xxx</span>
<span class="t" id="t189" style="left:293.30px;top:626.00px;font-size:13px;font-weight:bold;color:#000;transform:scaleX(1.0068);transform-origin:left">Ausbau Kellerräume</span>
<span class="t" id="t190" style="left:506.42px;top:626.00px;font-size:13px;font-weight:bold;color:#000">01.12.2014</span>
<span class="t" id="t191" style="left:639.02px;top:626.00px;font-size:13px;font-weight:bold;color:#000">30.06.2015</span>
<span class="t" id="t192" style="left:771.68px;top:626.00px;font-size:13px;font-weight:bold;color:#000">9'000</span>
<span class="t" id="t193" style="left:1105.66px;top:626.00px;font-size:13px;font-weight:normal;color:#000">-</span>
<span class="t" id="t194" style="left:1349.66px;top:626.00px;font-size:13px;font-weight:normal;color:#000">-</span>
<span class="t" id="t195" style="left:53.04px;top:647.00px;font-size:13px;font-weight:bold;color:#000">6310</span>
<span class="t" id="t196" style="left:112.20px;top:647.00px;font-size:13px;font-weight:bold;color:#000">xxx</span>
<span class="t" id="t197" style="left:293.30px;top:647.00px;font-size:13px;font-weight:bold;color:#000;transform:scaleX(0.9962);transform-origin:left">Waschtisch Arve</span>
<span class="t" id="t198" style="left:506.42px;top:647.00px;font-size:13px;font-weight:bold;color:#000">01.12.2014</span>
<span class="t" id="t199" style="left:639.02px;top:647.00px;font-size:13px;font-weight:bold;color:#000">30.06.2015</span>
<span class="t" id="t200" style="left:782.00px;top:647.00px;font-size:13px;font-weight:bold;color:#000">700</span>
<span class="t" id="t201" style="left:1105.66px;top:647.00px;font-size:13px;font-weight:normal;color:#000">-</span>
<span class="t" id="t202" style="left:1349.66px;top:647.00px;font-size:13px;font-weight:normal;color:#000">-</span>
<span class="t" id="t203" style="left:53.04px;top:668.00px;font-size:13px;font-weight:bold;color:#000">6310</span>
<span class="t" id="t204" style="left:1105.66px;top:668.00px;font-size:13px;font-weight:normal;color:#000">-</span>
<span class="t" id="t205" style="left:1349.66px;top:668.00px;font-size:13px;font-weight:normal;color:#000">-</span>
<span class="t" id="t206" style="left:53.04px;top:689.00px;font-size:13px;font-weight:bold;color:#000">6310</span>
<span class="t" id="t207" style="left:1105.66px;top:689.00px;font-size:13px;font-weight:normal;color:#000">-</span>
<span class="t" id="t208" style="left:1349.66px;top:689.00px;font-size:13px;font-weight:normal;color:#000">-</span>
<span class="t" id="t209" style="left:53.04px;top:710.00px;font-size:13px;font-weight:bold;color:#000">6310</span>
<span class="t" id="t210" style="left:1105.66px;top:710.00px;font-size:13px;font-weight:normal;color:#000">-</span>
<span class="t" id="t211" style="left:1349.66px;top:710.00px;font-size:13px;font-weight:normal;color:#000">-</span>
<span class="t" id="t212" style="left:53.04px;top:731.00px;font-size:13px;font-weight:bold;color:#000">6310</span>
<span class="t" id="t213" style="left:1105.66px;top:731.00px;font-size:13px;font-weight:normal;color:#000">-</span>
<span class="t" id="t214" style="left:1349.66px;top:731.00px;font-size:13px;font-weight:normal;color:#000">-</span>
<span class="t" id="t215" style="left:53.04px;top:752.00px;font-size:13px;font-weight:bold;color:#000">6310</span>
<span class="t" id="t216" style="left:1105.66px;top:752.00px;font-size:13px;font-weight:normal;color:#000">-</span>
<span class="t" id="t217" style="left:1349.66px;top:752.00px;font-size:13px;font-weight:normal;color:#000">-</span>
<span class="t" id="t218" style="left:53.04px;top:773.00px;font-size:13px;font-weight:bold;color:#000">6310</span>
<span class="t" id="t219" style="left:112.20px;top:773.00px;font-size:13px;font-weight:bold;color:#000;transform:scaleX(1.0220);transform-origin:left">Diverse kleine Aufträge</span>
<span class="t" id="t220" style="left:639.02px;top:773.00px;font-size:13px;font-weight:bold;color:#000">31.07.2018</span>
<span class="t" id="t221" style="left:771.68px;top:773.00px;font-size:13px;font-weight:bold;color:#000">4'000</span>
<span class="t" id="t222" style="left:812.80px;top:773.00px;font-size:13px;font-weight:bold;color:#000">fertig</span>
<span class="t" id="t223" style="left:1105.66px;top:773.00px;font-size:13px;font-weight:normal;color:#000">-</span>
<span class="t" id="t224" style="left:1349.66px;top:773.00px;font-size:13px;font-weight:normal;color:#000">-</span>
<span class="t" id="t225" style="left:77.58px;top:804.50px;font-size:13px;font-weight:bold;color:#000">6300</span>
<span class="t" id="t226" style="left:112.30px;top:804.50px;font-size:13px;font-weight:bold;color:#000;transform:scaleX(1.0347);transform-origin:left">Total per Monatsende:</span>
<span class="t" id="t227" style="left:784.66px;top:804.50px;font-size:13px;font-weight:bold;color:#000">-</span>
<span class="t" id="t228" style="left:940.66px;top:804.50px;font-size:13px;font-weight:bold;color:#000">-</span>
<span class="t" id="t229" style="left:1019.66px;top:804.50px;font-size:13px;font-weight:bold;color:#000">-</span>
<span class="t" id="t230" style="left:1105.66px;top:804.50px;font-size:13px;font-weight:bold;color:#000">-</span>
<span class="t" id="t231" style="left:1184.66px;top:804.50px;font-size:13px;font-weight:bold;color:#000">-</span>
<span class="t" id="t232" style="left:1263.66px;top:804.50px;font-size:13px;font-weight:bold;color:#000">-</span>
<span class="t" id="t233" style="left:1349.66px;top:804.50px;font-size:13px;font-weight:bold;color:#000">-</span>
<span class="t" id="t234" style="left:77.58px;top:826.50px;font-size:13px;font-weight:bold;color:#000">6310</span>
<span class="t" id="t235" style="left:112.30px;top:826.50px;font-size:13px;font-weight:bold;color:#000;transform:scaleX(1.0347);transform-origin:left">Total per Monatsende:</span>
<span class="t" id="t236" style="left:757.52px;top:826.50px;font-size:13px;font-weight:bold;color:#000">686'700</span>
<span class="t" id="t237" style="left:920.45px;top:826.50px;font-size:13px;font-weight:bold;color:#000">25'850</span>
<span class="t" id="t238" style="left:999.45px;top:826.50px;font-size:13px;font-weight:bold;color:#000">16'500</span>
<span class="t" id="t239" style="left:1092.68px;top:826.50px;font-size:13px;font-weight:bold;color:#000">9'350</span>
<span class="t" id="t240" style="left:1164.45px;top:826.50px;font-size:13px;font-weight:bold;color:#000">40'200</span>
<span class="t" id="t241" style="left:1243.45px;top:826.50px;font-size:13px;font-weight:bold;color:#000">84'700</span>
<span class="t" id="t242" style="left:1325.12px;top:826.50px;font-size:13px;font-weight:bold;color:#000">-44'500</span>
<span class="t" id="t243" style="left:77.58px;top:847.50px;font-size:13px;font-weight:bold;color:#000">6320</span>
<span class="t" id="t244" style="left:112.30px;top:847.50px;font-size:13px;font-weight:bold;color:#000;transform:scaleX(1.0347);transform-origin:left">Total per Monatsende:</span>
<span class="t" id="t245" style="left:784.66px;top:847.50px;font-size:13px;font-weight:bold;color:#000">-</span>
<span class="t" id="t246" style="left:940.66px;top:847.50px;font-size:13px;font-weight:bold;color:#000">-</span>
<span class="t" id="t247" style="left:1019.66px;top:847.50px;font-size:13px;font-weight:bold;color:#000">-</span>
<span class="t" id="t248" style="left:1105.66px;top:847.50px;font-size:13px;font-weight:bold;color:#000">-</span>
<span class="t" id="t249" style="left:1184.66px;top:847.50px;font-size:13px;font-weight:bold;color:#000">-</span>
<span class="t" id="t250" style="left:1263.66px;top:847.50px;font-size:13px;font-weight:bold;color:#000">-</span>
<span class="t" id="t251" style="left:1349.66px;top:847.50px;font-size:13px;font-weight:bold;color:#000">-</span>
</div><div id="h">
<div style="left:0px;top:0px;width:1381px;height:66px;background:#e6e6e6"></div>
<div style="left:0px;top:66px;width:25px;height:807px;background:#e6e6e6"></div>
<div style="left:0px;top:66px;width:1381px;height:1px;background:#9e9e9e"></div>
<div style="left:25px;top:48px;width:1px;height:825px;background:#9e9e9e"></div>
<div style="left:109px;top:48px;width:1px;height:18px;background:#c4c4c4"></div>
<div style="left:456px;top:48px;width:1px;height:18px;background:#c4c4c4"></div>
<div style="left:573px;top:48px;width:1px;height:18px;background:#c4c4c4"></div>
<div style="left:706px;top:48px;width:1px;height:18px;background:#c4c4c4"></div>
<div style="left:809px;top:48px;width:1px;height:18px;background:#c4c4c4"></div>
<div style="left:965px;top:48px;width:1px;height:18px;background:#c4c4c4"></div>
<div style="left:1044px;top:48px;width:1px;height:18px;background:#c4c4c4"></div>
<div style="left:1130px;top:48px;width:1px;height:18px;background:#c4c4c4"></div>
<div style="left:1209px;top:48px;width:1px;height:18px;background:#c4c4c4"></div>
<div style="left:1288px;top:48px;width:1px;height:18px;background:#c4c4c4"></div>
<div style="left:1374px;top:48px;width:1px;height:18px;background:#c4c4c4"></div>
<div style="left:289px;top:45px;width:1px;height:21px;background:#c4c4c4"></div>
<div style="left:293px;top:45px;width:1px;height:21px;background:#c4c4c4"></div>
<div style="left:0px;top:130px;width:25px;height:1px;background:#b4b4b4"></div>
<div style="left:0px;top:146px;width:25px;height:1px;background:#b4b4b4"></div>
<div style="left:0px;top:150px;width:25px;height:1px;background:#b4b4b4"></div>
<div style="left:0px;top:170px;width:25px;height:1px;background:#b4b4b4"></div>
<div style="left:0px;top:191px;width:25px;height:1px;background:#b4b4b4"></div>
<div style="left:0px;top:263px;width:25px;height:1px;background:#b4b4b4"></div>
<div style="left:0px;top:282px;width:25px;height:1px;background:#b4b4b4"></div>
<div style="left:0px;top:286px;width:25px;height:1px;background:#b4b4b4"></div>
<div style="left:0px;top:305px;width:25px;height:1px;background:#b4b4b4"></div>
<div style="left:0px;top:326px;width:25px;height:1px;background:#b4b4b4"></div>
<div style="left:0px;top:347px;width:25px;height:1px;background:#b4b4b4"></div>
<div style="left:0px;top:368px;width:25px;height:1px;background:#b4b4b4"></div>
<div style="left:0px;top:389px;width:25px;height:1px;background:#b4b4b4"></div>
<div style="left:0px;top:410px;width:25px;height:1px;background:#b4b4b4"></div>
<div style="left:0px;top:431px;width:25px;height:1px;background:#b4b4b4"></div>
<div style="left:0px;top:452px;width:25px;height:1px;background:#b4b4b4"></div>
<div style="left:0px;top:473px;width:25px;height:1px;background:#b4b4b4"></div>
<div style="left:0px;top:494px;width:25px;height:1px;background:#b4b4b4"></div>
<div style="left:0px;top:515px;width:25px;height:1px;background:#b4b4b4"></div>
<div style="left:0px;top:536px;width:25px;height:1px;background:#b4b4b4"></div>
<div style="left:0px;top:557px;width:25px;height:1px;background:#b4b4b4"></div>
<div style="left:0px;top:578px;width:25px;height:1px;background:#b4b4b4"></div>
<div style="left:0px;top:599px;width:25px;height:1px;background:#b4b4b4"></div>
<div style="left:0px;top:620px;width:25px;height:1px;background:#b4b4b4"></div>
<div style="left:0px;top:641px;width:25px;height:1px;background:#b4b4b4"></div>
<div style="left:0px;top:662px;width:25px;height:1px;background:#b4b4b4"></div>
<div style="left:0px;top:683px;width:25px;height:1px;background:#b4b4b4"></div>
<div style="left:0px;top:704px;width:25px;height:1px;background:#b4b4b4"></div>
<div style="left:0px;top:725px;width:25px;height:1px;background:#b4b4b4"></div>
<div style="left:0px;top:746px;width:25px;height:1px;background:#b4b4b4"></div>
<div style="left:0px;top:767px;width:25px;height:1px;background:#b4b4b4"></div>
<div style="left:0px;top:788px;width:25px;height:1px;background:#b4b4b4"></div>
<div style="left:0px;top:799px;width:25px;height:1px;background:#b4b4b4"></div>
<div style="left:0px;top:821px;width:25px;height:1px;background:#b4b4b4"></div>
<div style="left:0px;top:843px;width:25px;height:1px;background:#b4b4b4"></div>
<div style="left:0px;top:864px;width:25px;height:1px;background:#b4b4b4"></div>
<div style="left:0px;top:886px;width:25px;height:1px;background:#b4b4b4"></div>
<div style="left:886px;top:4px;width:1px;height:869px;background:#9a9a9a"></div>
<div style="left:3px;top:6px;width:17px;height:17px;border:1px solid #8c8c8c;background:#e6e6e6"></div>
<div style="left:3px;top:25px;width:17px;height:17px;border:1px solid #8c8c8c;background:#e6e6e6"></div>
<div style="left:293px;top:12px;width:594px;height:2px;background:#8f8f8f"></div>
<div style="left:293px;top:12px;width:2px;height:6px;background:#8f8f8f"></div>
<div style="left:373px;top:31px;width:2px;height:2px;background:#999"></div>
<div style="left:514px;top:31px;width:2px;height:2px;background:#999"></div>
<div style="left:639px;top:31px;width:2px;height:2px;background:#999"></div>
<div style="left:757px;top:31px;width:2px;height:2px;background:#999"></div>
<div style="left:847px;top:31px;width:2px;height:2px;background:#999"></div>
<div style="left:11px;top:51px;width:0;height:0;border-bottom:12px solid #bdbdbd;border-left:11px solid transparent"></div>
<span class="t" id="t252" style="left:9.44px;top:11.19px;font-size:11px;font-weight:normal;color:#333">1</span>
<span class="t" id="t253" style="left:9.44px;top:30.19px;font-size:11px;font-weight:normal;color:#333">2</span>
<span class="t" id="t254" style="left:62.99px;top:51.17px;font-size:13.5px;font-weight:normal;color:#262626">A</span>
<span class="t" id="t255" style="left:195.99px;top:51.17px;font-size:13.5px;font-weight:normal;color:#262626">B</span>
<span class="t" id="t256" style="left:369.12px;top:51.17px;font-size:13.5px;font-weight:normal;color:#262626">D</span>
<span class="t" id="t257" style="left:510.49px;top:51.17px;font-size:13.5px;font-weight:normal;color:#262626">E</span>
<span class="t" id="t258" style="left:635.88px;top:51.17px;font-size:13.5px;font-weight:normal;color:#262626">F</span>
<span class="t" id="t259" style="left:752.74px;top:51.17px;font-size:13.5px;font-weight:normal;color:#262626">G</span>
<span class="t" id="t260" style="left:843.12px;top:51.17px;font-size:13.5px;font-weight:normal;color:#262626">H</span>
<span class="t" id="t261" style="left:915.88px;top:51.17px;font-size:13.5px;font-weight:normal;color:#262626">AM</span>
<span class="t" id="t262" style="left:995.62px;top:51.17px;font-size:13.5px;font-weight:normal;color:#262626">AN</span>
<span class="t" id="t263" style="left:1077.74px;top:51.17px;font-size:13.5px;font-weight:normal;color:#262626">AO</span>
<span class="t" id="t264" style="left:1160.99px;top:51.17px;font-size:13.5px;font-weight:normal;color:#262626">AP</span>
<span class="t" id="t265" style="left:1239.24px;top:51.17px;font-size:13.5px;font-weight:normal;color:#262626">AQ</span>
<span class="t" id="t266" style="left:1322.12px;top:51.17px;font-size:13.5px;font-weight:normal;color:#262626">AR</span>
<span class="t" id="t267" style="left:1403.99px;top:51.17px;font-size:13.5px;font-weight:normal;color:#262626">AS</span>
<span class="t" id="t268" style="left:9.10px;top:111.15px;font-size:14px;font-weight:normal;color:#262626">1</span>
<span class="t" id="t269" style="left:9.10px;top:131.65px;font-size:14px;font-weight:normal;color:#262626">2</span>
<span class="t" id="t270" style="left:9.10px;top:153.55px;font-size:14px;font-weight:normal;color:#262626">4</span>
<span class="t" id="t271" style="left:9.10px;top:174.55px;font-size:14px;font-weight:normal;color:#262626">5</span>
<span class="t" id="t272" style="left:9.10px;top:247.15px;font-size:14px;font-weight:normal;color:#262626">6</span>
<span class="t" id="t273" style="left:9.10px;top:268.15px;font-size:14px;font-weight:normal;color:#262626">7</span>
<span class="t" id="t274" style="left:5.21px;top:288.95px;font-size:14px;font-weight:normal;color:#262626">77</span>
<span class="t" id="t275" style="left:5.21px;top:309.95px;font-size:14px;font-weight:normal;color:#262626">78</span>
<span class="t" id="t276" style="left:5.21px;top:330.95px;font-size:14px;font-weight:normal;color:#262626">79</span>
<span class="t" id="t277" style="left:5.21px;top:351.95px;font-size:14px;font-weight:normal;color:#262626">80</span>
<span class="t" id="t278" style="left:5.21px;top:372.95px;font-size:14px;font-weight:normal;color:#262626">81</span>
<span class="t" id="t279" style="left:5.21px;top:393.95px;font-size:14px;font-weight:normal;color:#262626">82</span>
<span class="t" id="t280" style="left:5.21px;top:414.95px;font-size:14px;font-weight:normal;color:#262626">83</span>
<span class="t" id="t281" style="left:5.21px;top:435.95px;font-size:14px;font-weight:normal;color:#262626">84</span>
<span class="t" id="t282" style="left:5.21px;top:456.95px;font-size:14px;font-weight:normal;color:#262626">85</span>
<span class="t" id="t283" style="left:5.21px;top:477.95px;font-size:14px;font-weight:normal;color:#262626">86</span>
<span class="t" id="t284" style="left:5.21px;top:498.95px;font-size:14px;font-weight:normal;color:#262626">87</span>
<span class="t" id="t285" style="left:5.21px;top:519.95px;font-size:14px;font-weight:normal;color:#262626">88</span>
<span class="t" id="t286" style="left:5.21px;top:540.95px;font-size:14px;font-weight:normal;color:#262626">89</span>
<span class="t" id="t287" style="left:5.21px;top:561.95px;font-size:14px;font-weight:normal;color:#262626">90</span>
<span class="t" id="t288" style="left:5.21px;top:582.95px;font-size:14px;font-weight:normal;color:#262626">91</span>
<span class="t" id="t289" style="left:5.21px;top:603.95px;font-size:14px;font-weight:normal;color:#262626">92</span>
<span class="t" id="t290" style="left:5.21px;top:624.95px;font-size:14px;font-weight:normal;color:#262626">93</span>
<span class="t" id="t291" style="left:5.21px;top:645.95px;font-size:14px;font-weight:normal;color:#262626">94</span>
<span class="t" id="t292" style="left:5.21px;top:666.95px;font-size:14px;font-weight:normal;color:#262626">95</span>
<span class="t" id="t293" style="left:5.21px;top:687.95px;font-size:14px;font-weight:normal;color:#262626">96</span>
<span class="t" id="t294" style="left:5.21px;top:708.95px;font-size:14px;font-weight:normal;color:#262626">97</span>
<span class="t" id="t295" style="left:5.21px;top:729.95px;font-size:14px;font-weight:normal;color:#262626">98</span>
<span class="t" id="t296" style="left:5.21px;top:750.95px;font-size:14px;font-weight:normal;color:#262626">99</span>
<span class="t" id="t297" style="left:1.32px;top:771.95px;font-size:14px;font-weight:normal;color:#262626">100</span>
<span class="t" id="t298" style="left:1.32px;top:803.75px;font-size:14px;font-weight:normal;color:#262626">107</span>
<span class="t" id="t299" style="left:1.32px;top:825.65px;font-size:14px;font-weight:normal;color:#262626">108</span>
<span class="t" id="t300" style="left:1.32px;top:846.85px;font-size:14px;font-weight:normal;color:#262626">109</span>
<span class="t" id="t301" style="left:1.84px;top:868.65px;font-size:14px;font-weight:normal;color:#262626">110</span>
<div style="left:0;top:789px;width:25px;height:10px;overflow:hidden"><span class="t" id="t302" style="left:1.32px;top:-5.85px;font-size:14px;color:#262626">106</span></div>
</div></body></html>
